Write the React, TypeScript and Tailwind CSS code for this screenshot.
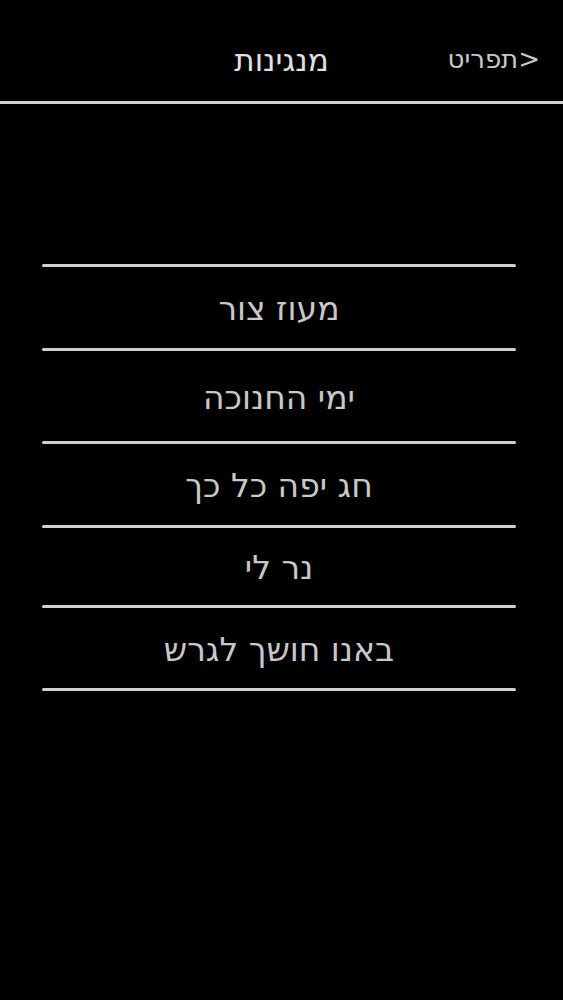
import React from "react";

const items: { t: string; h: number }[] = [
  { t: "מעוז צור", h: 81 },
  { t: "ימי החנוכה", h: 90 },
  { t: "חג יפה כל כך", h: 81 },
  { t: "נר לי", h: 77 },
  { t: "באנו חושך לגרש", h: 80 },
];

const Line = () => <div className="h-[3px] w-full rounded-full bg-[#cfcfcf]" />;

export default function App() {
  return (
    <div
      dir="rtl"
      className="min-h-[1000px] w-full bg-black text-[#d6d6d6]"
      style={{ fontFamily: '"DejaVu Sans", "Liberation Sans", sans-serif' }}
    >
      <div className="relative flex h-[101px] items-center justify-center pt-[20px]">
        <span className="text-[31px] leading-none text-[#e0e0e0]">מנגינות</span>
        <span className="absolute right-[23px] top-[46px] text-[26px] leading-none text-[#c8c8c8]">&lt;תפריט</span>
      </div>
      <div className="h-[3px] w-full bg-[#cfcfcf]" />
      <div className="ml-[42px] mr-[47px] mt-[160px]">
        <Line />
        {items.map((it) => (
          <div key={it.t}>
            <div className="flex items-center justify-center pt-[2px] text-[33px] leading-none text-[#c8c8c8]" style={{ height: it.h }}>
              {it.t}
            </div>
            <Line />
          </div>
        ))}
      </div>
    </div>
  );
}
